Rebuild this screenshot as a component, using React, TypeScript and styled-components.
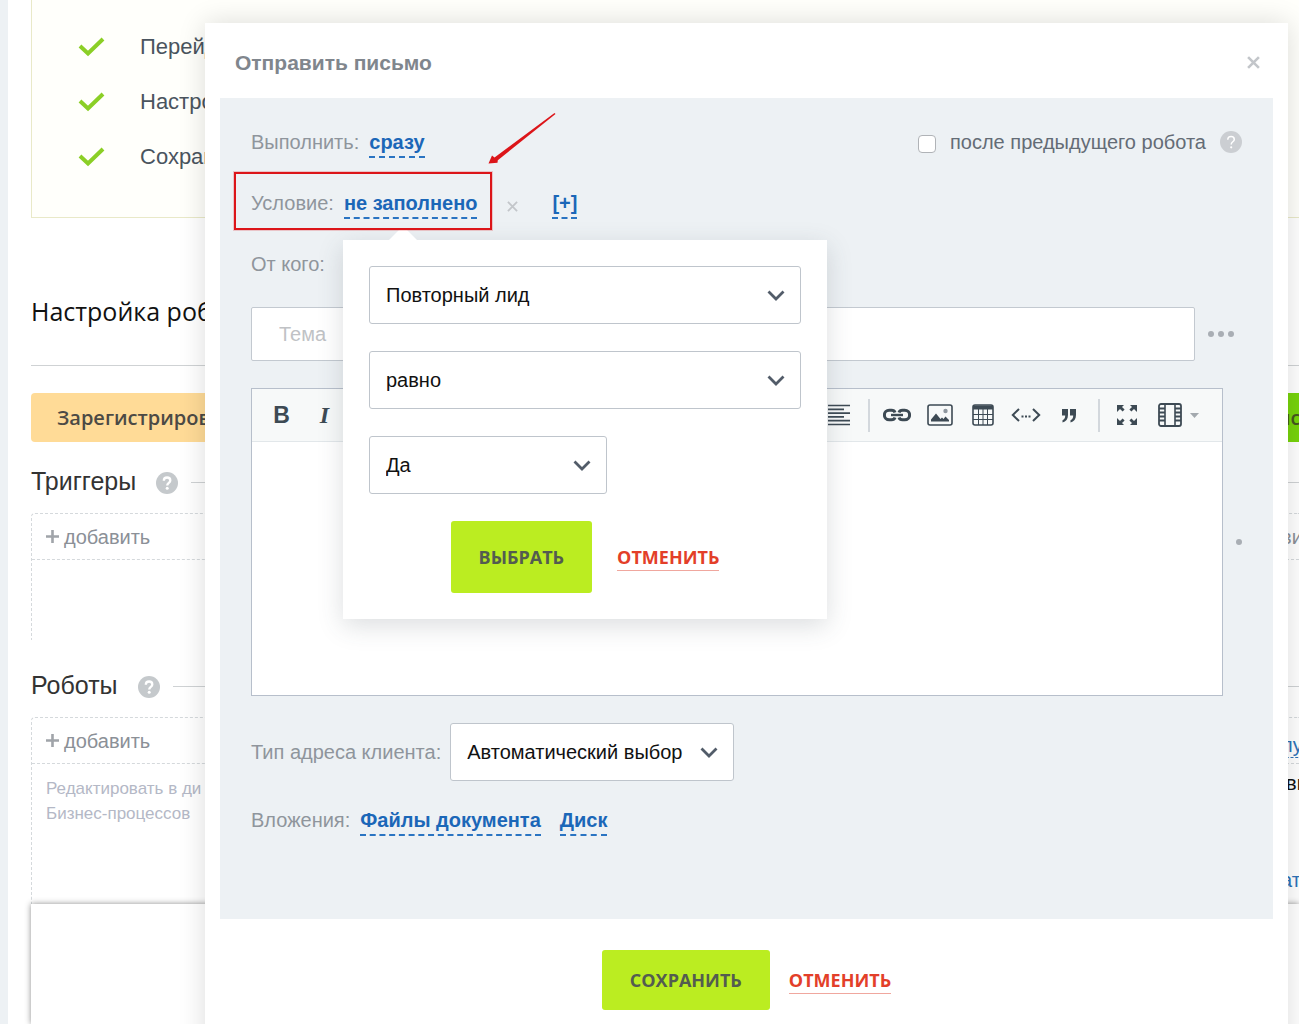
import React, { useId } from 'react';
import styled, { createGlobalStyle, css } from 'styled-components';

const sans = '"Liberation Sans", Arial, Helvetica, sans-serif';
const openSans = '"Open Sans", "Noto Sans", sans-serif';

const GlobalStyle = createGlobalStyle`
  *, *::before, *::after { box-sizing: border-box; }
  body { margin: 0; font-family: ${sans}; font-size: 20px; line-height: 24px; color: #333; background: #fff; }
  button, input, select, textarea { font: inherit; color: inherit; }
  button { padding: 0; border: 0; background: none; cursor: pointer; }
  h1, h2, h3, p, ul { margin: 0; padding: 0; font-weight: 400; }
`;

/* ---------- page under the dialog ---------- */

const Page = styled.div`
  position: relative;
  display: flex;
  height: 100vh;
  overflow: hidden;
`;

const Rail = styled.div`
  flex: 0 0 8px;
  background: #edf1f4;
`;

const Main = styled.main`
  flex: 1;
  min-width: 0;
  display: flex;
  flex-direction: column;
  padding-left: 23px;
`;

const Tutorial = styled.ul`
  list-style: none;
  padding: 19px 0 33px 45px;
  border: 1px solid #e9e9c8;
  border-width: 0 0 1px 1px;
  background: #fffffb;
`;

const TutorialItem = styled.li`
  display: flex;
  align-items: center;
  gap: 35px;
  height: 55px;
  font-size: 22px;
  color: #4a545e;
`;

const PageTitle = styled.h1`
  margin-top: 76px;
  padding-bottom: 37px;
  border-bottom: 1px solid #cfd2d4;
  font: 25px/34px ${openSans};
  color: #111;
`;

const ActionBar = styled.div`
  display: flex;
  justify-content: space-between;
  margin-top: 27px;
`;

const StageButton = styled.button<{ $tone: 'amber' | 'green' }>`
  height: 49px;
  font: 600 20px/27px ${openSans};
  white-space: nowrap;
  ${({ $tone }) =>
    $tone === 'amber'
      ? css`
          padding: 0 26px;
          border-radius: 4px;
          background: #ffdb97;
          color: #4c4a45;
        `
      : css`
          width: 24px;
          padding-left: 2px;
          text-align: left;
          background: #77d40b;
          color: #46591f;
        `}
`;

const SectionHead = styled.div<{ $gap: number }>`
  display: flex;
  align-items: center;
  height: 30px;
  margin-top: ${({ $gap }) => $gap}px;

  > svg {
    margin-top: 3px;
  }
`;

const SectionTitle = styled.h2`
  margin-right: 20px;
  font-size: 25px;
  line-height: 30px;
`;

const Rule = styled.div`
  flex: 1;
  height: 1px;
  margin: 3px 0 0 13px;
  background: #cfd2d4;
`;

const DropZone = styled.section<{ $tall?: boolean }>`
  height: ${({ $tall }) => ($tall ? 187 : 127)}px;
  margin-top: 17px;
  border: 1px dashed #d5d9dc;
  border-width: 1px 0 0 1px;
  border-top-left-radius: 4px;
`;

const DropRow = styled.div`
  display: flex;
  align-items: center;
  justify-content: space-between;
  height: 46px;
  padding-left: 14px;
  border-bottom: 1px dashed #d5d9dc;
`;

const AddButton = styled.button`
  color: #8b9097;
  display: flex;
  gap: 5px;
  align-items: center;
`;

const Columns = styled.div`
  display: flex;
  justify-content: space-between;
`;

const Note = styled.p`
  padding: 12px 0 0 14px;
  font-size: 17px;
  line-height: 25px;
  color: #b4b8c6;
`;

const Edge = styled.div`
  display: flex;
  flex-direction: column;
  align-items: flex-start;
  width: 18px;
  white-space: nowrap;
  color: #8b9097;
`;

const EdgeLink = styled.a<{ $dashed?: boolean }>`
  border-bottom: ${({ $dashed }) => ($dashed ? '1px dashed #2f73b8' : 'none')};
  margin-top: ${({ $dashed }) => ($dashed ? 10 : 0)}px;
  color: #2f73b8;
  text-decoration: none;
`;

const EdgeText = styled.span`
  color: #111;
  padding: 7px 0 73px 5px;
`;

const BottomPanel = styled.div`
  flex: 1;
  background: #fff;
  box-shadow: 0 0 6px rgba(0, 0, 0, 0.45);
`;

/* ---------- dialog ---------- */

const Dialog = styled.section`
  position: absolute;
  inset: 23px 11px -40px 205px;
  padding: 0 15px;
  background: #fff;
  box-shadow: 0 0 26px rgba(0, 0, 0, 0.14);
`;

const DialogHead = styled.header`
  display: flex;
  align-items: center;
  justify-content: space-between;
  height: 75px;
  padding: 4px 8px 0 15px;
`;

const DialogTitle = styled.h2`
  font-size: 21px;
  font-weight: 700;
  color: #80868d;
`;

const IconButton = styled.button`
  display: flex;
  align-items: center;
  justify-content: center;
  width: 24px;
  height: 24px;
  color: #c3c6ca;
`;

const Form = styled.div`
  display: flex;
  flex-direction: column;
  gap: 27px;
  padding: 32px 31px 83px;
  background: #edf1f4;
`;

const Settings = styled.div`
  display: flex;
  flex-direction: column;
  gap: 33px;
`;

const Line = styled.div`
  display: flex;
  align-items: center;
  height: 28px;
`;

const Caption = styled.span`
  height: 28px;
  margin-right: 10px;
  white-space: nowrap;
  color: #8f959c;
`;

const DashedLink = styled.a`
  height: 28px;
  border-bottom: 2px dashed #2a74c2;
  font-weight: 700;
  white-space: nowrap;
  text-decoration: none;
  color: #1b67b8;

  & + & {
    margin-left: 19px;
  }
`;

const RunOption = styled.div`
  display: flex;
  align-items: center;
  align-self: flex-start;
  gap: 14px;
  height: 24px;
  margin-left: auto;
`;

const CheckLabel = styled.label`
  display: flex;
  align-items: center;
  gap: 14px;
  color: #646c76;
`;

const Checkbox = styled.input`
  appearance: none;
  width: 18px;
  height: 18px;
  margin: 3px 0 0;
  border: 1px solid #b0b3b7;
  border-radius: 4px;
  background: #fff;
`;

const Condition = styled.div`
  position: relative;
  display: flex;
`;

const Highlight = styled.div`
  position: absolute;
  z-index: 3;
  inset: -19px -15px -11px -17px;
  border: 2px solid #dc1519;
  box-shadow: 0 0 0 1px rgba(220, 21, 25, 0.2);
  pointer-events: none;
`;

const Pointer = styled.svg`
  position: absolute;
  z-index: 3;
  left: 237px;
  top: -80px;
  pointer-events: none;
`;

const Remove = styled(IconButton)`
  margin: 3px 28px 0 23px;
`;

const SubjectRow = styled.div`
  display: flex;
  align-items: center;
  gap: 13px;
`;

const Subject = styled.input`
  flex: 1;
  min-width: 0;
  height: 54px;
  padding: 0 27px;
  border: 1px solid #c3c9d0;
  border-radius: 2px;
  background: #fff;

  &::placeholder {
    color: #c0c2c5;
    opacity: 1;
  }
`;

const MoreButton = styled.button`
  display: flex;
  gap: 4px;
  margin-right: 8px;
`;

const Dot = styled.i`
  width: 6px;
  height: 6px;
  border-radius: 50%;
  background: #a9aeb4;
`;

const EditorRow = styled.div`
  display: flex;
  align-items: center;
  gap: 13px;
`;

const Editor = styled.div`
  flex: 1;
  min-width: 0;
  border: 1px solid #b7bfcb;
  background: #fff;
`;

const Toolbar = styled.div`
  display: flex;
  align-items: center;
  height: 53px;
  padding: 0 16px 0 8px;
  border-bottom: 1px solid #e2e7ea;
  background: #f7f9f9;
  color: #3d4a54;
`;

const Tool = styled.button<{ $wide?: boolean }>`
  display: flex;
  align-items: center;
  justify-content: center;
  gap: 8px;
  width: ${({ $wide }) => ($wide ? 58 : 43)}px;
  height: 44px;

  ${({ $wide }) =>
    $wide &&
    css`
      padding-left: 2px;
    `}
`;

const ToolGap = styled.div`
  flex: 1;
`;

const ToolDivider = styled.div`
  width: 2px;
  height: 33px;
  margin: 0 5px 0 8px;
  background: #d3d8dd;
`;

const BoldGlyph = styled.b`
  font-size: 23px;
`;

const ItalicGlyph = styled.i`
  font: italic 700 24px/24px "Liberation Serif", serif;
`;

const EditorText = styled.textarea`
  display: block;
  width: 100%;
  height: 253px;
  padding: 16px;
  border: 0;
  resize: none;
  outline: none;
`;

const SelectBox = styled.div<{ $width?: number }>`
  position: relative;
  width: ${({ $width }) => ($width ? `${$width}px` : '100%')};

  svg {
    position: absolute;
    right: 16px;
    top: 24px;
    pointer-events: none;
  }
`;

const NativeSelect = styled.select`
  appearance: none;
  display: block;
  width: 100%;
  height: 58px;
  padding: 0 44px 0 16px;
  border: 1px solid #bfc5cc;
  border-radius: 3px;
  background: #fff;
  color: #111;
`;

const AddressLabel = styled.label`
  margin-right: 9px;
  white-space: nowrap;
  color: #8f959c;
`;

const AddressRow = styled.div`
  display: flex;
  align-items: center;
`;

/* ---------- popup ---------- */

const Popup = styled.div`
  position: absolute;
  z-index: 2;
  left: 92px;
  top: 49px;
  display: flex;
  flex-direction: column;
  gap: 27px;
  width: 484px;
  padding: 26px;
  background: #fff;
  box-shadow: 0 7px 24px rgba(60, 70, 85, 0.18);

  &::before {
    content: '';
    position: absolute;
    left: 46px;
    top: -10px;
    width: 28px;
    height: 10px;
    background: #fff;
    clip-path: polygon(10px 0, 18px 0, 28px 10px, 0 10px);
  }
`;

const Actions = styled.div<{ $gap: number }>`
  display: flex;
  align-items: center;
  justify-content: center;
  gap: ${({ $gap }) => $gap}px;
`;

const Footer = styled.footer`
  padding-top: 31px;
`;

const Submit = styled.button<{ $height: number }>`
  height: ${({ $height }) => $height}px;
  padding: 0 28px;
  border-radius: 3px;
  background: #bbed21;
  font: 700 18px/24px ${openSans};
  color: #535c50;
`;

const Cancel = styled.button`
  border-bottom: 1px solid #f0a79e;
  font: 700 18px/26px ${openSans};
  color: #e33f29;
`;

/* ---------- icons ---------- */

const Check = () => (
  <svg width="28" height="20" viewBox="0 0 28 20" fill="none" aria-hidden="true">
    <path d="M3 9l8 7.500L26 2" stroke="#8bcf26" strokeWidth="4" />
  </svg>
);

const Help = ({ light }: { light?: boolean }) => (
  <svg width="22" height="22" viewBox="0 0 22 22" fill="none" aria-hidden="true">
    <circle cx="11" cy="11" r="11" fill={light ? '#cbced2' : '#c5c9cc'} />
    <path
      d="M7.800 8.700c0-2 1.400-3.200 3.300-3.200s3.200 1.200 3.200 2.900c0 2.300-3.100 2.500-3.100 5"
      stroke="#fff"
      strokeWidth={light ? 1.5 : 2.3}
    />
    <circle cx="11.200" cy="16.300" r={light ? 1.1 : 1.5} fill="#fff" />
  </svg>
);

const Cross = ({ size, weight }: { size: number; weight: number }) => (
  <svg width={size} height={size} viewBox="0 0 12 12" fill="none" aria-hidden="true">
    <path d="M1 1l10 10M11 1L1 11" stroke="currentColor" strokeWidth={weight} />
  </svg>
);

const Plus = () => (
  <svg width="13" height="13" viewBox="0 0 13 13" aria-hidden="true">
    <path d="M0 6.500h13M6.500 0v13" stroke="#a0a4a9" strokeWidth="2.600" />
  </svg>
);

const Chevron = () => (
  <svg width="18" height="12" viewBox="0 0 18 12" fill="none" aria-hidden="true">
    <path d="M1.500 1.500L9 9l7.500-7.500" stroke="#525c69" strokeWidth="2.800" />
  </svg>
);

const AlignIcon = () => (
  <svg width="24" height="22" viewBox="0 0 24 22" stroke="currentColor" strokeWidth="1.700" aria-hidden="true">
    <path d="M1 1.500h22M1 5.300h16M1 9.100h22M1 12.900h16M1 16.700h22M1 20.500h22" />
  </svg>
);

const LinkIcon = () => (
  <svg width="28" height="14" viewBox="0 0 28 14" fill="none" stroke="currentColor" aria-hidden="true">
    <path d="M12 9.500C11.500 11 10 11.800 8.500 11.800H6.200a4.800 4.800 0 010-9.600h2.300C10 2.200 11.500 3 12 4.500" strokeWidth="3" />
    <path d="M16 4.500c.5-1.500 2-2.300 3.500-2.300h2.300a4.800 4.800 0 010 9.600h-2.300c-1.500 0-3-.8-3.500-2.300" strokeWidth="3" />
    <path d="M8 7h12" strokeWidth="2.400" />
  </svg>
);

const ImageIcon = () => (
  <svg width="26" height="22" viewBox="0 0 26 22" fill="none" aria-hidden="true">
    <rect x="1" y="1" width="24" height="20" rx="2" stroke="currentColor" strokeWidth="1.600" />
    <path d="M4 17.500v-2l5-6 4.500 5.500 1.500-1.500 1.500 1.500 2-2.500 3.500 3.500v1.500z" fill="currentColor" />
    <circle cx="18.500" cy="7" r="2.200" fill="#8f979f" />
  </svg>
);

const TableIcon = () => (
  <svg width="22" height="22" viewBox="0 0 22 22" fill="none" stroke="currentColor" aria-hidden="true">
    <rect x="1" y="1" width="20" height="20" rx="2" strokeWidth="1.600" />
    <path d="M1 3.500h20" strokeWidth="4" />
    <path d="M1 10.500h20M1 15.500h20M6.500 5v16M11 5v16M15.500 5v16" strokeWidth="1" />
  </svg>
);

const CodeIcon = () => (
  <svg width="30" height="14" viewBox="0 0 30 14" fill="none" stroke="currentColor" aria-hidden="true">
    <path d="M8 1L1.800 7 8 13M22 1l6.200 6-6.200 6" strokeWidth="2" />
    <path d="M10.500 8.500h2M14 8.500h2M17.500 8.500h2" strokeWidth="2.200" />
  </svg>
);

const QuoteIcon = () => (
  <svg width="16" height="15" viewBox="0 0 16 15" fill="currentColor" aria-hidden="true">
    <path d="M1 1h6v6c0 4-2 6.500-5.500 7.500v-2.300C3.300 11.500 4.200 10 4.200 7.500H1zM9 1h6v6c0 4-2 6.500-5.500 7.500v-2.300c1.800-.7 2.700-2.200 2.700-4.700H9z" />
  </svg>
);

const ExpandIcon = () => (
  <svg width="22" height="22" viewBox="0 0 22 22" fill="currentColor" aria-hidden="true">
    <path d="M1 1h7L6 3l2.600 2.600-2 2L4 5 1 8zM21 1v7l-3-3-2.600 2.600-2-2L16 3l-2-2zM1 21v-7l3 3 2.600-2.600 2 2L6 19l2 2zM21 21h-7l2-2-2.600-2.600 2-2L18 17l3-3z" />
  </svg>
);

const VideoIcon = () => (
  <svg width="24" height="24" viewBox="0 0 24 24" fill="none" stroke="currentColor" aria-hidden="true">
    <rect x="1" y="1" width="22" height="22" rx="2" strokeWidth="1.800" />
    <path d="M7 1v22M17 1v22" strokeWidth="1.600" />
    <path d="M1 5.500h6M1 9.500h6M1 13.500h6M1 17.500h6M17 5.500h6M17 9.500h6M17 13.500h6M17 17.500h6" strokeWidth="2" />
  </svg>
);

const Caret = () => (
  <svg width="9" height="5" viewBox="0 0 9 5" aria-hidden="true">
    <path d="M0 0h9L4.500 5z" fill="#a3a9ae" />
  </svg>
);

/* ---------- composed parts ---------- */

const Select = ({ label, id, value, width }: { label?: string; id?: string; value: string; width?: number }) => (
  <SelectBox $width={width}>
    <NativeSelect id={id} aria-label={label}>
      <option>{value}</option>
    </NativeSelect>
    <Chevron />
  </SelectBox>
);

const steps = ['Перейдите', 'Настройте', 'Сохраните'];

const tools = [
  { name: 'Ссылка', icon: <LinkIcon /> },
  { name: 'Изображение', icon: <ImageIcon /> },
  { name: 'Таблица', icon: <TableIcon /> },
  { name: 'Код', icon: <CodeIcon /> },
  { name: 'Цитата', icon: <QuoteIcon /> },
];

const ConditionPopup = () => (
  <Popup>
    <Select label="Поле" value="Повторный лид" />
    <Select label="Сравнение" value="равно" />
    <Select label="Значение" value="Да" width={238} />
    <Actions $gap={25}>
      <Submit $height={72}>ВЫБРАТЬ</Submit>
      <Cancel>ОТМЕНИТЬ</Cancel>
    </Actions>
  </Popup>
);

export default function App() {
  const afterId = useId();
  const addressId = useId();

  return (
    <>
      <GlobalStyle />
      <Page>
        <Rail />
        <Main>
          <Tutorial>
            {steps.map((step) => (
              <TutorialItem key={step}>
                <Check />
                {step}
              </TutorialItem>
            ))}
          </Tutorial>
          <PageTitle>Настройка роботов</PageTitle>
          <ActionBar>
            <StageButton $tone="amber">Зарегистрирован</StageButton>
            <StageButton $tone="green">ис</StageButton>
          </ActionBar>

          <SectionHead $gap={24}>
            <SectionTitle>Триггеры</SectionTitle>
            <Help />
            <Rule />
          </SectionHead>
          <DropZone>
            <DropRow>
              <AddButton>
                <Plus />
                добавить
              </AddButton>
              <Edge>ви</Edge>
            </DropRow>
          </DropZone>

          <SectionHead $gap={30}>
            <SectionTitle>Роботы</SectionTitle>
            <Help />
            <Rule />
          </SectionHead>
          <DropZone $tall>
            <DropRow>
              <AddButton>
                <Plus />
                добавить
              </AddButton>
              <Edge>
                <EdgeLink href="#" $dashed>
                  лу
                </EdgeLink>
              </Edge>
            </DropRow>
            <Columns>
              <Note>
                Редактировать в ди
                <br />
                Бизнес-процессов
              </Note>
              <Edge>
                <EdgeText>ви</EdgeText>
                <EdgeLink href="#">ат</EdgeLink>
              </Edge>
            </Columns>
          </DropZone>
          <BottomPanel />
        </Main>

        <Dialog role="dialog" aria-label="Отправить письмо">
          <DialogHead>
            <DialogTitle>Отправить письмо</DialogTitle>
            <IconButton aria-label="Закрыть">
              <Cross size={13} weight={2.4} />
            </IconButton>
          </DialogHead>

          <Form>
            <Settings>
              <Line>
                <Caption>Выполнить:</Caption>
                <DashedLink href="#">сразу</DashedLink>
                <RunOption>
                  <CheckLabel htmlFor={afterId}>
                    <Checkbox type="checkbox" id={afterId} />
                    после предыдущего робота
                  </CheckLabel>
                  <Help light />
                </RunOption>
              </Line>
              <Line>
                <Condition>
                  <Caption>Условие:</Caption>
                  <DashedLink href="#">не заполнено</DashedLink>
                  <ConditionPopup />
                  <Highlight />
                  <Pointer width="70" height="56" viewBox="0 0 70 56" aria-hidden="true">
                    <path d="M66.500 2L6.500 46.500 4 44.500.5 52.500l9-.7.300-2.500L67.500 3z" fill="#dc1519" />
                  </Pointer>
                </Condition>
                <Remove aria-label="Удалить условие">
                  <Cross size={11} weight={2} />
                </Remove>
                <DashedLink href="#">[+]</DashedLink>
              </Line>
              <Line>
                <Caption>От кого:</Caption>
              </Line>
            </Settings>

            <SubjectRow>
              <Subject type="text" placeholder="Тема" aria-label="Тема" />
              <MoreButton aria-label="Ещё">
                <Dot />
                <Dot />
                <Dot />
              </MoreButton>
            </SubjectRow>

            <EditorRow>
              <Editor>
                <Toolbar>
                  <Tool aria-label="Полужирный">
                    <BoldGlyph>B</BoldGlyph>
                  </Tool>
                  <Tool aria-label="Курсив">
                    <ItalicGlyph>I</ItalicGlyph>
                  </Tool>
                  <ToolGap />
                  <Tool aria-label="Выравнивание">
                    <AlignIcon />
                  </Tool>
                  <ToolDivider />
                  {tools.map(({ name, icon }) => (
                    <Tool key={name} aria-label={name}>
                      {icon}
                    </Tool>
                  ))}
                  <ToolDivider />
                  <Tool aria-label="Развернуть">
                    <ExpandIcon />
                  </Tool>
                  <Tool $wide aria-label="Видео">
                    <VideoIcon />
                    <Caret />
                  </Tool>
                </Toolbar>
                <EditorText aria-label="Текст письма" />
              </Editor>
              <Dot />
            </EditorRow>

            <AddressRow>
              <AddressLabel htmlFor={addressId}>Тип адреса клиента:</AddressLabel>
              <Select id={addressId} value="Автоматический выбор" width={284} />
            </AddressRow>

            <Line>
              <Caption>Вложения:</Caption>
              <DashedLink href="#">Файлы документа</DashedLink>
              <DashedLink href="#">Диск</DashedLink>
            </Line>
          </Form>

          <Footer>
            <Actions $gap={19}>
              <Submit $height={60}>СОХРАНИТЬ</Submit>
              <Cancel>ОТМЕНИТЬ</Cancel>
            </Actions>
          </Footer>
        </Dialog>
      </Page>
    </>
  );
}
